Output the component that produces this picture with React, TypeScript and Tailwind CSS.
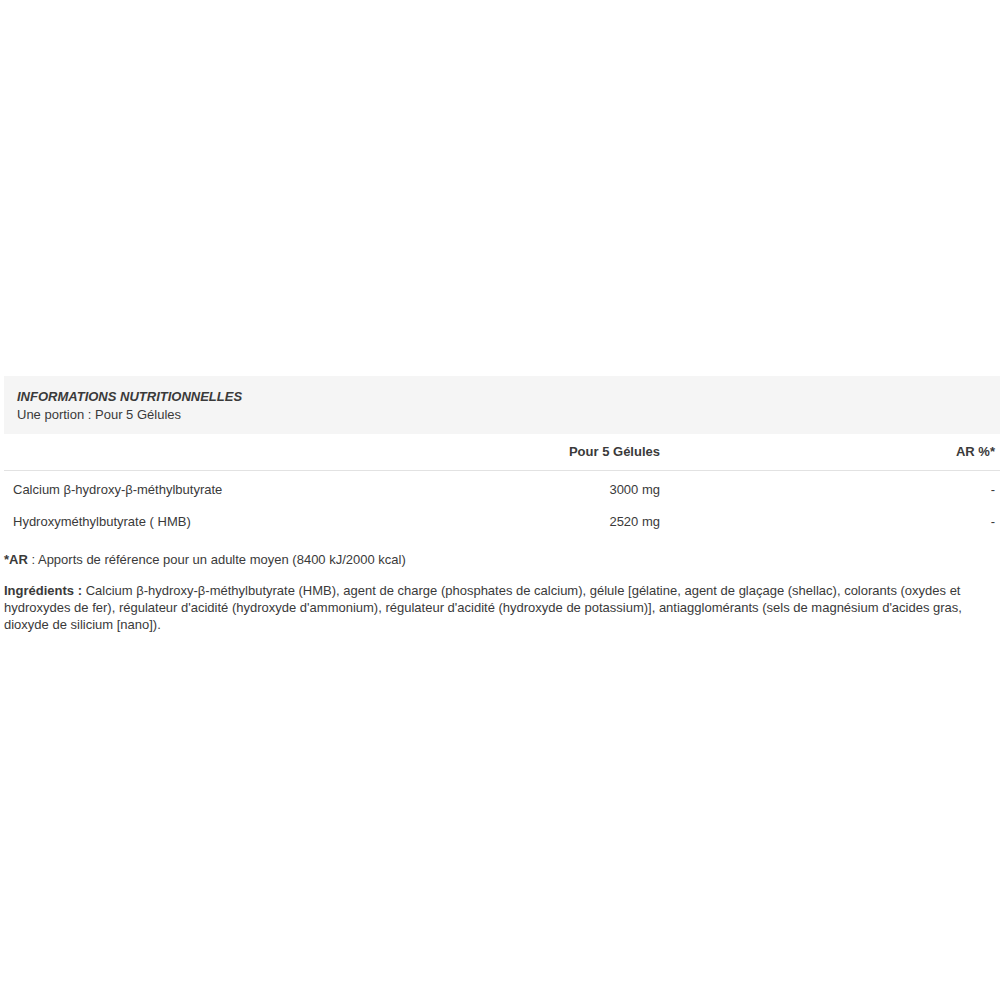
export default function App() {
  const rows = [
    { name: "Calcium β-hydroxy-β-méthylbutyrate", value: "3000 mg", ar: "-" },
    { name: "Hydroxyméthylbutyrate ( HMB)", value: "2520 mg", ar: "-" },
  ];
  return (
    <div className="min-h-[1000px] bg-white pt-[376px] pl-[4px] text-[13px] text-[#3a3a3a] font-['Liberation_Sans',Arial,sans-serif]">
      <div className="bg-[#f5f5f5] px-[13px] pt-[12px] pb-[10px] leading-[18px]">
        <div className="font-bold italic">INFORMATIONS NUTRITIONNELLES</div>
        <div>Une portion : Pour 5 Gélules</div>
      </div>
      <div className="flex h-[37px] items-center border-b border-[#e2e2e2] pr-[5px] font-bold">
        <div className="flex-1" />
        <div className="w-[200px] text-right pr-[275px] box-content">Pour 5 Gélules</div>
        <div className="w-[60px] text-right">AR %*</div>
      </div>
      <div className="pt-[3px]">
        {rows.map((r) => (
          <div key={r.name} className="flex h-[32px] items-center pl-[9px] pr-[5px]">
            <div className="flex-1">{r.name}</div>
            <div className="w-[200px] text-right pr-[275px] box-content">{r.value}</div>
            <div className="w-[60px] text-right">{r.ar}</div>
          </div>
        ))}
      </div>
      <p className="mt-[13px] leading-[18px]">
        <span className="font-bold">*AR</span> : Apports de référence pour un adulte moyen (8400 kJ/2000 kcal)
      </p>
      <p className="mt-[13px] leading-[17px] pr-[20px]">
        <span className="font-bold">Ingrédients :</span>{" "}
        Calcium β-hydroxy-β-méthylbutyrate (HMB), agent de charge (phosphates de calcium), gélule [gélatine, agent de glaçage (shellac), colorants (oxydes et hydroxydes de fer), régulateur d'acidité (hydroxyde d'ammonium), régulateur d'acidité (hydroxyde de potassium)], antiagglomérants (sels de magnésium d'acides gras, dioxyde de silicium [nano]).
      </p>
    </div>
  );
}
